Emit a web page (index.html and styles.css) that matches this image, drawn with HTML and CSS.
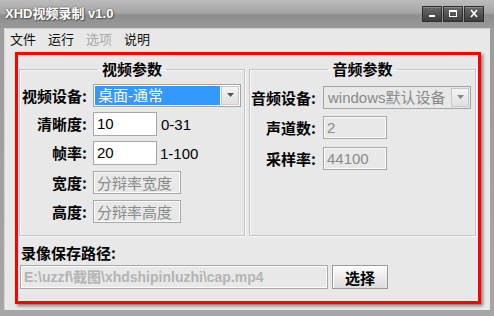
FILE: index.html
```html
<!DOCTYPE html>
<html lang="zh-CN">
<head>
  <meta charset="UTF-8">
  <title>XHD视频录制 v1.0</title>
  <link rel="stylesheet" href="styles.css">
</head>
<body>

  <div class="window">
    <div class="titlebar">
      <span class="title">XHD视频录制 v1.0</span>
      <div class="caption-btns">
        <span class="cap-btn"><svg width="10" height="9" viewBox="0 0 10 9"><rect x="2" y="6" width="6" height="2" fill="#fff"/></svg></span>
        <span class="cap-btn"><svg width="10" height="9" viewBox="0 0 10 9"><rect x="1.5" y="1.5" width="7" height="6" fill="none" stroke="#fff" stroke-width="1"/><rect x="1" y="1" width="8" height="2" fill="#fff"/></svg></span>
        <span class="cap-btn"><svg width="10" height="9" viewBox="0 0 10 9"><path d="M2 1 L8 8 M8 1 L2 8" stroke="#fff" stroke-width="1.6"/></svg></span>
      </div>
    </div>

    <div class="client">
      <ul class="menu">
        <li>文件</li>
        <li>运行</li>
        <li class="disabled">选项</li>
        <li>说明</li>
      </ul>

      <div class="panel">
        <div class="groups">
          <fieldset class="group group-video">
            <legend>视频参数</legend>
            <div class="row row-combo">
              <label class="lbl">视频设备:</label>
              <div class="combo">
                <span class="combo-text selected">桌面-通常</span>
                <span class="combo-btn"><svg width="7" height="5" viewBox="0 0 7 5"><path d="M0 0 H7 L3.5 4 Z" fill="#555"/><rect x="3" y="3" width="1" height="1" fill="#2c2"/></svg></span>
              </div>
            </div>
            <div class="row row-q">
              <label class="lbl">清晰度:</label>
              <div class="field short">10</div>
              <span class="hint">0-31</span>
            </div>
            <div class="row row-fps">
              <label class="lbl">帧率:</label>
              <div class="field short">20</div>
              <span class="hint">1-100</span>
            </div>
            <div class="row row-w">
              <label class="lbl">宽度:</label>
              <div class="field wide disabled">分辩率宽度</div>
            </div>
            <div class="row row-h">
              <label class="lbl">高度:</label>
              <div class="field wide disabled">分辩率高度</div>
            </div>
          </fieldset>

          <fieldset class="group group-audio">
            <legend>音频参数</legend>
            <div class="row row-acombo">
              <label class="lbl">音频设备:</label>
              <div class="combo disabled">
                <span class="combo-text">windows默认设备</span>
                <span class="combo-btn"><svg width="7" height="5" viewBox="0 0 7 5"><path d="M0 0 H7 L3.5 4 Z" fill="#888"/><rect x="3" y="3" width="1" height="1" fill="#2c2"/></svg></span>
              </div>
            </div>
            <div class="row row-ch">
              <label class="lbl">声道数:</label>
              <div class="field short disabled">2</div>
            </div>
            <div class="row row-rate">
              <label class="lbl">采样率:</label>
              <div class="field short disabled">44100</div>
            </div>
          </fieldset>
        </div>

        <div class="path">
          <div class="path-label">录像保存路径:</div>
          <div class="path-row">
            <div class="field path-field disabled">E:\uzzf\截图\xhdshipinluzhi\cap.mp4</div>
            <button class="btn">选择</button>
          </div>
        </div>
      </div>
    </div>
  </div>

</body>
</html>
```

FILE: styles.css
```css
html, body {
  margin: 0;
  padding: 0;
}
body {
  width: 494px;
  height: 316px;
  overflow: hidden;
  font-family: "Liberation Sans", "Noto Sans CJK SC", sans-serif;
  background: #9a9a9a;
}
.window {
  width: 494px;
  height: 316px;
  box-sizing: border-box;
  display: flex;
  flex-direction: column;
  background: linear-gradient(#b4b4b4, #9c9c9c 30px, #a6a6a6);
  padding: 0 4px 6px 4px;
}
.titlebar {
  height: 28px;
  display: flex;
  align-items: center;
  justify-content: space-between;
  margin: 0 -4px;
  padding: 0 10px 0 5px;
  background: linear-gradient(#bcbcbc, #a6a6a6 45%, #8e8e8e 55%, #999999);
}
.title {
  color: #fff;
  font-weight: bold;
  font-size: 13px;
  margin-top: -3px;
  text-shadow: 0 0 2px #444, 1px 1px 1px #555;
}
.caption-btns {
  display: flex;
  gap: 1px;
  margin-top: -1px;
}
.cap-btn {
  width: 18px;
  height: 14px;
  display: flex;
  align-items: center;
  justify-content: center;
  border: 1px solid #2e2e2e;
  background: linear-gradient(#6a6a6a, #3d3d3d);
  box-shadow: inset 0 1px 0 #8a8a8a;
}
.client {
  flex: 1;
  background: #e8e8e8;
  border-left: 1px solid #d4d4d4;
  border-top: 1px solid #cfcfcf;
  display: flex;
  flex-direction: column;
}
.menu {
  list-style: none;
  margin: 0;
  padding: 0 0 0 5px;
  height: 19px;
  display: flex;
  align-items: center;
  gap: 12px;
  font-size: 13px;
  color: #111;
}
.menu .disabled {
  color: #aaa;
}
.panel {
  margin: 4px 9px 0 10px;
  border: 3px solid #ff0000;
  box-shadow: 2px 2px 3px rgba(0,0,0,0.45);
  height: 246px;
  display: flex;
  flex-direction: column;
}
.groups {
  display: flex;
  gap: 4px;
  padding: 0 2px 0 1px;
}
.group {
  margin: 6px 0 0 0;
  padding: 7px 0 0 0;
  height: 175px;
  box-sizing: border-box;
  border: 1px solid #c4c4c4;
  box-shadow: inset 1px 1px 0 #f8f8f8, 1px 1px 0 #f8f8f8;
  min-width: 0;
}
.group-video {
  width: 227px;
}
.group-audio {
  width: 228px;
}
.group legend {
  margin: 0 auto;
  padding: 0 4px;
  font-family: "Noto Sans CJK SC", sans-serif;
  font-weight: bold;
  font-size: 15px;
  line-height: 16px;
  color: #000;
}
.row {
  display: flex;
  align-items: center;
}
.lbl {
  width: 68px;
  text-align: right;
  margin-right: 6px;
  font-family: "Noto Sans CJK SC", sans-serif;
  font-weight: bold;
  font-size: 15px;
  line-height: 18px;
  white-space: nowrap;
  color: #000;
}
.group-video .lbl {
  width: 67px;
}
.group-audio .lbl {
  width: 66px;
  margin-right: 7px;
}
.row-q { margin-top: 5px; }
.row-fps { margin-top: 5px; }
.row-w { margin-top: 6px; }
.row-h { margin-top: 6px; }
.row-acombo { margin-top: 2px; }
.row-ch { margin-top: 7px; }
.row-rate { margin-top: 8px; }

.combo {
  width: 148px;
  height: 23px;
  box-sizing: border-box;
  border: 1px solid #a4a4a4;
  background: #fff;
  display: flex;
  align-items: stretch;
  padding: 1px;
}
.combo.disabled {
  background: #e8e8e8;
}
.combo-text {
  flex: 1;
  font-size: 15px;
  line-height: 19px;
  padding-left: 3px;
  color: #8a8a8a;
  white-space: nowrap;
  overflow: hidden;
}
.combo-text.selected {
  background: #3399ff;
  color: #fff;
}
.combo-btn {
  width: 16px;
  margin-left: 1px;
  border: 1px solid #c8c8c8;
  background: linear-gradient(#f4f4f4, #e0e0e0);
  display: flex;
  align-items: center;
  justify-content: center;
}
.field {
  height: 24px;
  box-sizing: border-box;
  border: 1px solid #a8a8a8;
  box-shadow: inset 1px 1px 0 #fff;
  background: #fff;
  font-size: 15px;
  line-height: 22px;
  padding-left: 3px;
  color: #000;
  white-space: nowrap;
  overflow: hidden;
}
.field.short {
  width: 64px;
}
.field.wide {
  width: 88px;
  height: 23px;
  font-family: "Noto Sans CJK SC", sans-serif;
}
.field.disabled {
  background: #e8e8e8;
  color: #8a8a8a;
  box-shadow: inset 1px 1px 0 #fafafa, inset -1px -1px 0 #fafafa;
}
.group-audio .field.short {
  width: 64px;
  height: 23px;
}
.hint {
  margin-left: 4px;
  font-size: 15px;
  color: #000;
}
.row-fps .hint {
  margin-left: 3px;
}
.path {
  margin-top: 8px;
  padding: 0 0 0 2px;
}
.path-label {
  padding-left: 1px;
  font-family: "Noto Sans CJK SC", sans-serif;
  font-weight: bold;
  font-size: 15px;
  line-height: 17px;
  color: #000;
}
.path-row {
  margin-top: 4px;
  display: flex;
  gap: 4px;
}
.path-field {
  width: 308px;
  font-size: 14px;
  font-weight: bold;
  color: #b4b4b4 !important;
}
.btn {
  width: 56px;
  height: 24px;
  padding: 0;
  border: 1px solid #9a9a9a;
  background: linear-gradient(#fbfbfb, #ececec 50%, #dcdcdc);
  box-shadow: inset 1px 1px 0 #fff;
  font-family: "Noto Sans CJK SC", sans-serif;
  font-weight: bold;
  font-size: 15px;
  color: #000;
}
```
